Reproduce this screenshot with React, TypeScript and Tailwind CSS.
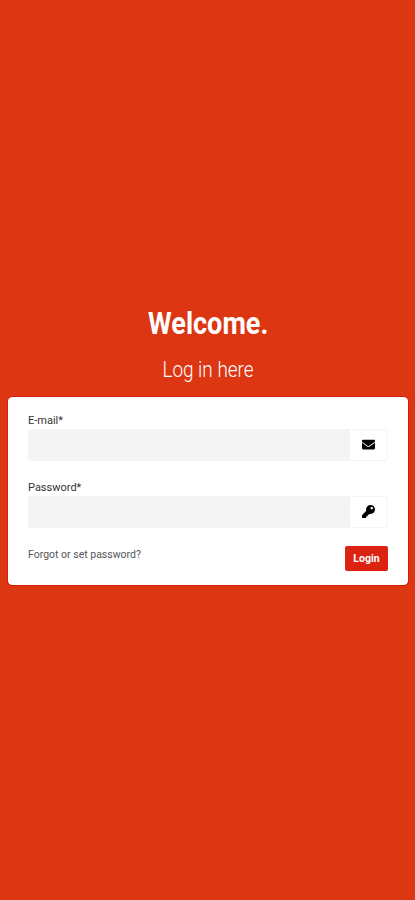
import { FaEnvelope, FaKey } from "react-icons/fa";

export default function LoginPage() {
  return (
    <main className="flex h-[900px] flex-col bg-[#dc3613] pt-[303px] pr-[6px] pl-[7px] font-['Roboto',sans-serif] text-[#333333]">
      <h1 className="text-center text-[32px] leading-[40px] font-bold text-white">
        <span className="inline-block scale-x-[0.845]">Welcome.</span>
      </h1>
      <h2 className="mt-[12px] text-center text-[22px] leading-[30px] font-[350] text-white">
        <span className="inline-block scale-x-[0.86]">Log in here</span>
      </h2>

      <form className="mt-[11px] h-[190px] rounded-[5px] border border-[#d81a0b] bg-white bg-clip-padding px-[20px] pt-[17px]">
        <label className="block text-[11px] leading-[14px]">E-mail*</label>
        <div className="mt-px flex h-[32px] rounded-[3px] border border-[#f4f4f4]">
          <input type="text" className="min-w-0 flex-1 bg-[#f4f4f4] outline-none" />
          <span className="flex w-[37px] items-center justify-center pb-px text-black">
            <FaEnvelope size={13} />
          </span>
        </div>

        <label className="mt-[20px] block text-[11px] leading-[14px]">Password*</label>
        <div className="mt-px flex h-[32px] rounded-[3px] border border-[#f4f4f4]">
          <input type="password" className="min-w-0 flex-1 bg-[#f4f4f4] outline-none" />
          <span className="flex w-[37px] items-center justify-center pb-px text-black">
            <FaKey size={13} />
          </span>
        </div>

        <div className="mt-[18px] flex justify-between">
          <a href="#" className="text-[10.5px] leading-[18px] text-[#555555]">
            Forgot or set password?
          </a>
          <button type="button" className="h-[25px] w-[43px] rounded-[2px] bg-[#dc2311] text-[10.5px] font-bold text-white">
            Login
          </button>
        </div>
      </form>
    </main>
  );
}
